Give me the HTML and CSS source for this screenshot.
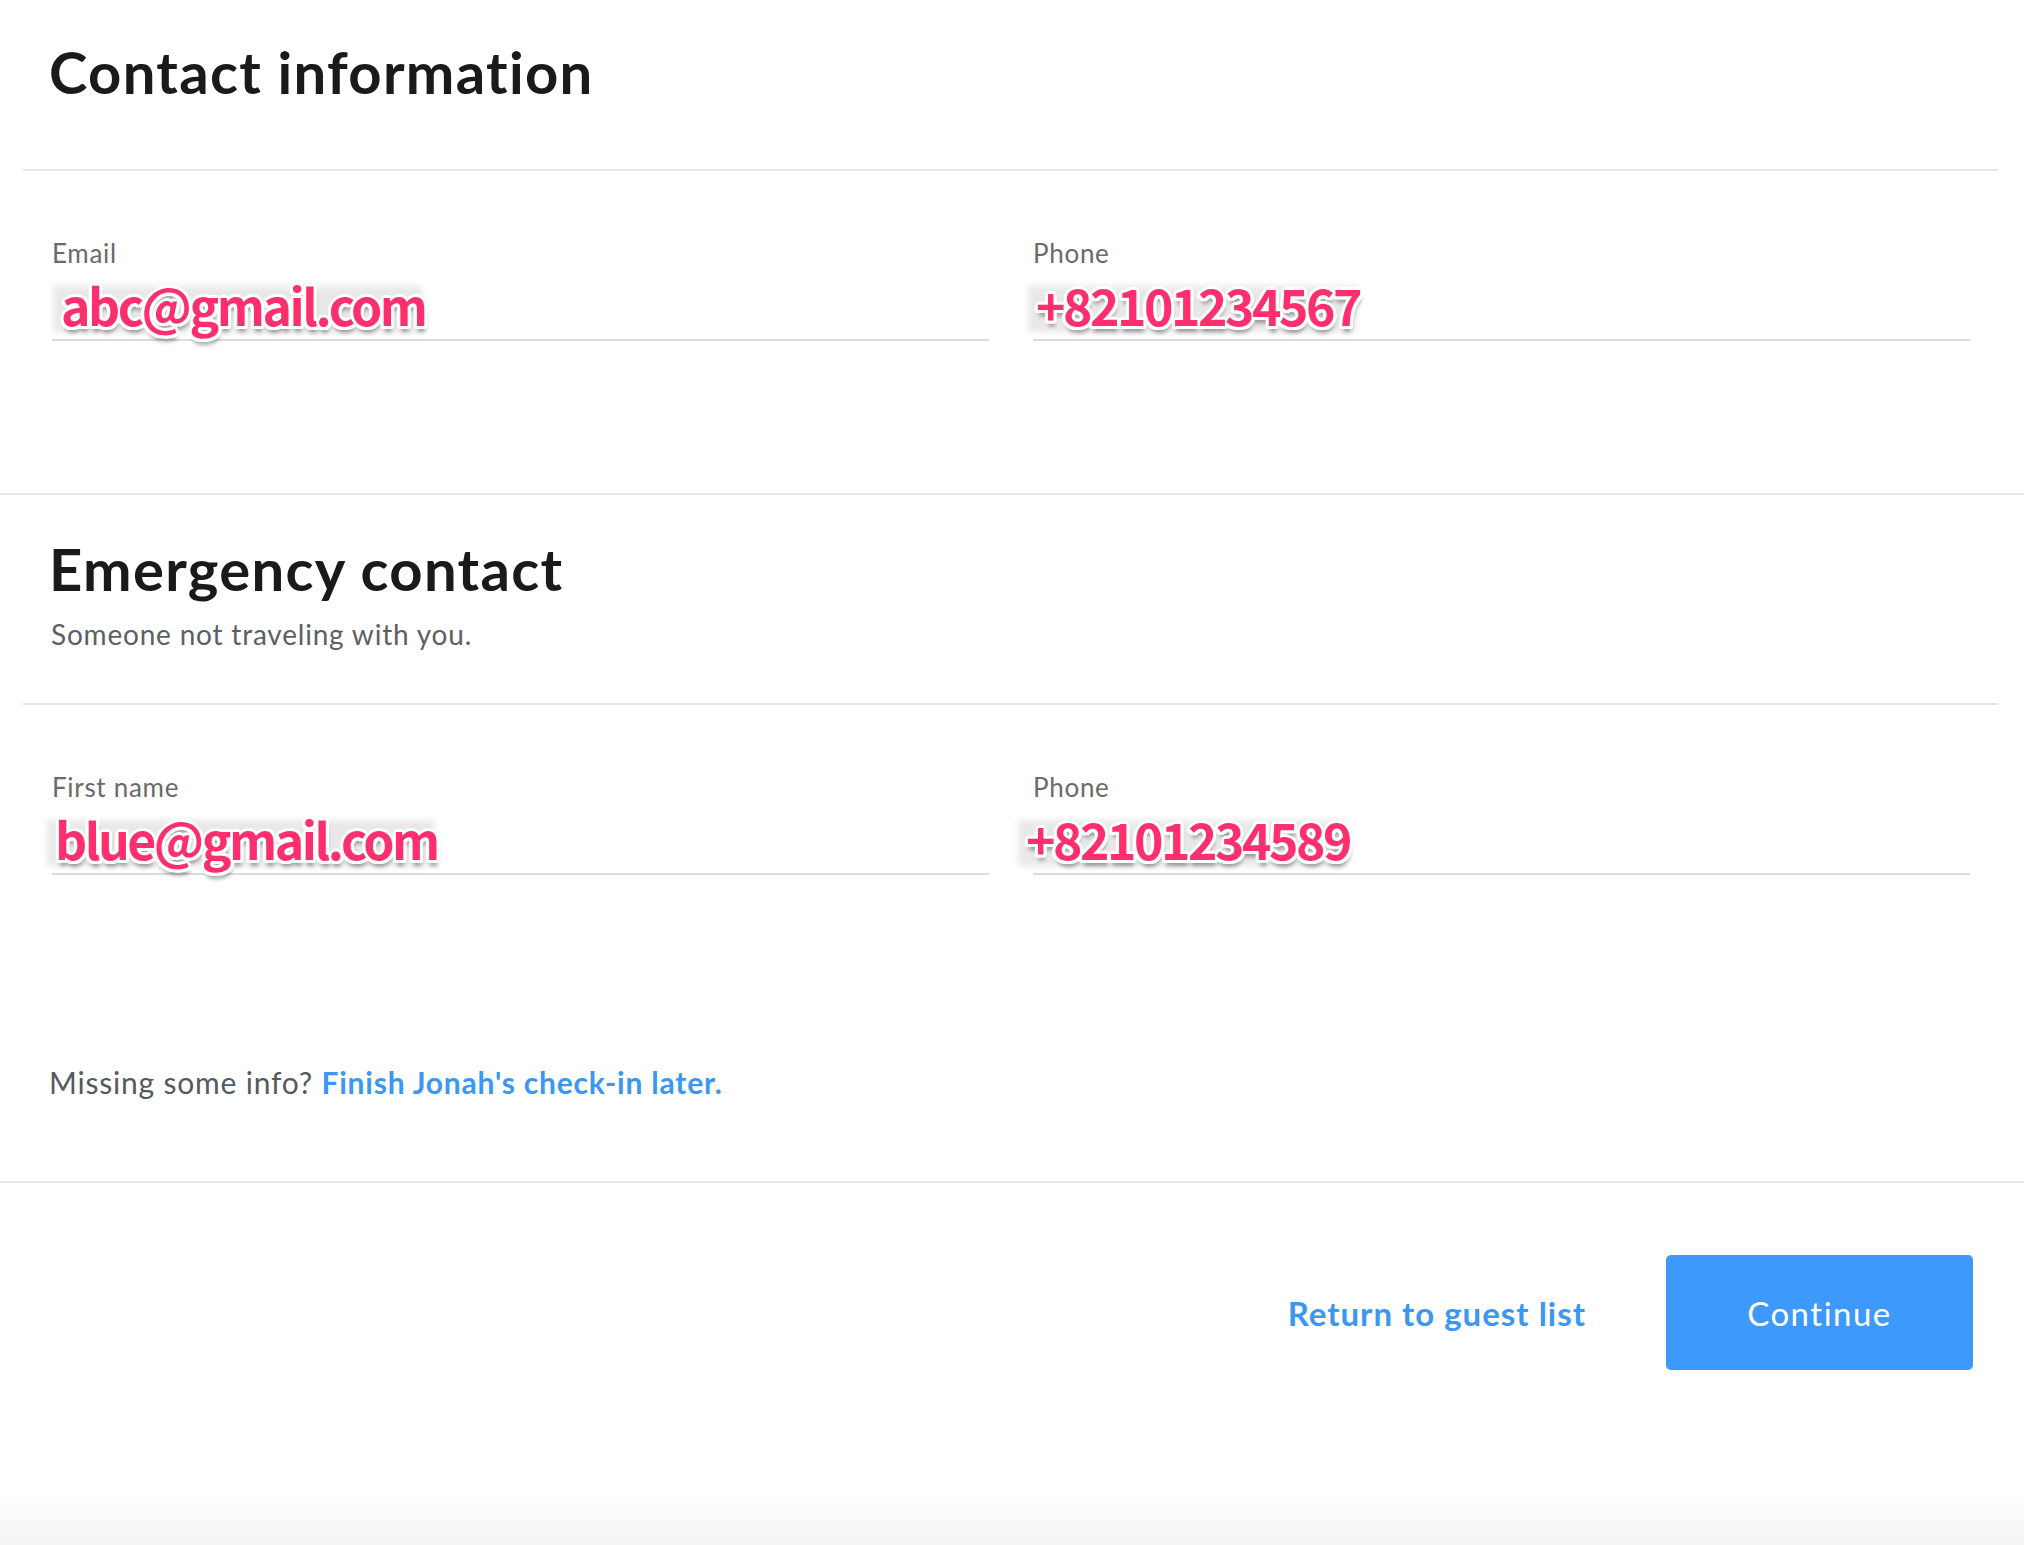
FILE: index.html
```html
<!DOCTYPE html>
<html lang="en">
<head>
<meta charset="utf-8">
<title>Contact information</title>
<link rel="stylesheet" href="styles.css">
</head>
<body>
<main class="page">
  <header class="head head--first">
    <h1 class="title">Contact information</h1>
  </header>
  <hr class="rule rule--inset">
  <div class="fields">
    <div class="field">
      <div class="label">Email</div>
      <div class="value"><span class="stamp stamp--a">abc@gmail.com</span></div>
    </div>
    <div class="field">
      <div class="label">Phone</div>
      <div class="value"><span class="stamp stamp--b">+82101234567</span></div>
    </div>
  </div>
  <hr class="rule rule--full">
  <header class="head head--second">
    <h1 class="title">Emergency contact</h1>
    <p class="sub">Someone not traveling with you.</p>
  </header>
  <hr class="rule rule--inset">
  <div class="fields">
    <div class="field">
      <div class="label">First name</div>
      <div class="value"><span class="stamp stamp--c">blue@gmail.com</span></div>
    </div>
    <div class="field">
      <div class="label">Phone</div>
      <div class="value"><span class="stamp stamp--d">+82101234589</span></div>
    </div>
  </div>
  <p class="note">Missing some info? <a class="link" href="#">Finish Jonah's check-in later.</a></p>
  <hr class="rule rule--full">
  <div class="actions">
    <a class="back" href="#">Return to guest list</a>
    <button class="primary" type="button">Continue</button>
  </div>
</main>
</body>
</html>
```
FILE: styles.css
```css
html, body {
  margin: 0;
  padding: 0;
}
body {
  min-height: 100vh;
  background: linear-gradient(to bottom, #ffffff calc(100% - 48px), #f3f3f3 100%);
  font-family: "Lato", "Noto Sans", sans-serif;
  color: #1b1b1b;
}
.page {
  display: flex;
  flex-direction: column;
}
.head {
  padding-left: 49px;
}
.head--first {
  padding-top: 37px;
  box-sizing: border-box;
  height: 169px;
}
.head--second {
  padding-top: 39px;
  padding-bottom: 52px;
}
.title {
  margin: 0;
  font-size: 58px;
  line-height: 1.2;
  font-weight: 700;
  color: #1a1a1a;
  letter-spacing: 1.3px;
}
.sub {
  margin: 14px 0 0 2px;
  font-size: 28px;
  line-height: 1.2;
  letter-spacing: 0.8px;
  color: #5b6065;
}
.rule {
  border: 0;
  height: 2px;
  margin: 0;
  background: #e6e6e6;
}
.rule--inset {
  margin-left: 23px;
  margin-right: 26px;
}
.fields {
  display: grid;
  grid-template-columns: 937px 937px;
  column-gap: 44px;
  padding: 67px 0 0 52px;
  height: 255px;
  box-sizing: content-box;
}
.field {
  display: flex;
  flex-direction: column;
}
.label {
  font-size: 26px;
  line-height: 1.2;
  letter-spacing: 0.7px;
  color: #6a6a6a;
}
.value {
  height: 72px;
  border-bottom: 2px solid #dcdcdc;
  display: flex;
  align-items: flex-end;
  box-sizing: border-box;
}
.stamp {
  position: relative;
  display: inline-block;
  font-family: "Noto Sans CJK KR", "Noto Sans", sans-serif;
  font-weight: 700;
  font-size: 50px;
  line-height: 1;
  color: #fd2f6c;
  margin-bottom: 10px;
  letter-spacing: -2.5px;
  text-shadow:
    3px 0 0 #fff, -3px 0 0 #fff, 0 3px 0 #fff, 0 -3px 0 #fff,
    2px 2px 0 #fff, -2px 2px 0 #fff, 2px -2px 0 #fff, -2px -2px 0 #fff,
    3px 2px 0 #fff, -3px 2px 0 #fff, 2px 3px 0 #fff, -2px 3px 0 #fff,
    1px 6px 4px rgba(0, 0, 0, 0.38);
}
.stamp::before {
  content: "";
  position: absolute;
  left: -8px;
  right: 4px;
  top: 14%;
  bottom: -6%;
  background: #d9d9d9;
  filter: blur(3px);
  opacity: 0.6;
  z-index: -1;
}
.stamp--a { margin-left: 9px; }
.stamp--b { margin-left: 3px; }
.stamp--c { margin-left: 3px; }
.stamp--d { margin-left: -7px; }
.note {
  margin: 0;
  padding: 37px 0 81px 49px;
  font-size: 30px;
  line-height: 1.2;
  letter-spacing: 0.8px;
  color: #555a5e;
}
.link {
  color: #3b97f0;
  font-weight: 700;
  text-decoration: none;
}
.actions {
  display: flex;
  justify-content: flex-end;
  align-items: center;
  gap: 80px;
  padding: 72px 51px 0 0;
}
.back {
  color: #3b97f0;
  font-size: 33px;
  font-weight: 700;
  letter-spacing: 1px;
  text-decoration: none;
}
.primary {
  width: 307px;
  height: 115px;
  border: 0;
  border-radius: 5px;
  background: #3d99fc;
  color: #fff;
  font-family: "Lato", "Noto Sans", sans-serif;
  font-size: 33px;
  letter-spacing: 1.5px;
  font-weight: 400;
  cursor: pointer;
}
```
